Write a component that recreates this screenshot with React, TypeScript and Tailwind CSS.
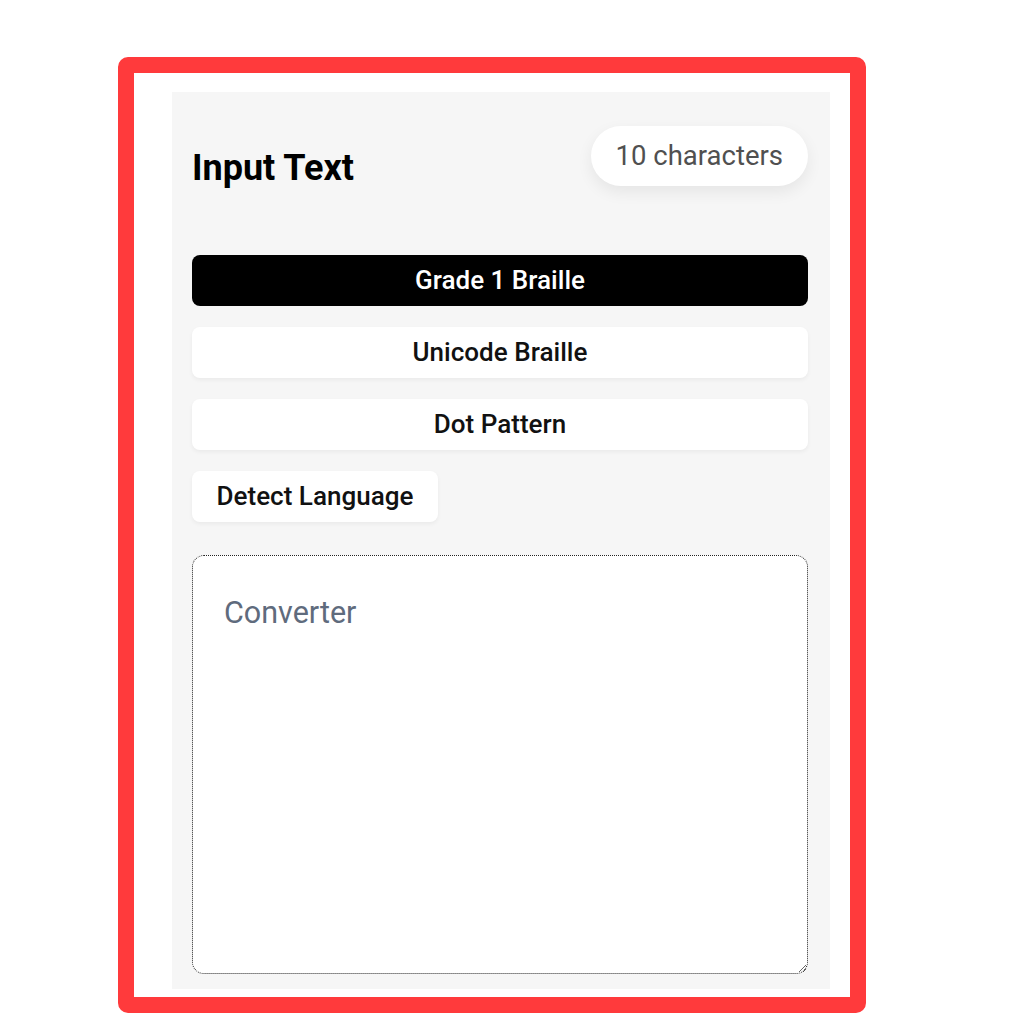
import React from "react";

const medium = { fontFamily: "'Roboto Medium', Roboto, 'Noto Sans', sans-serif" };

export default function App() {
  return (
    <div
      className="w-[1024px] h-[1024px] bg-white pt-[57px] pl-[118px]"
      style={{ fontFamily: "Roboto, 'Noto Sans', sans-serif" }}
    >
      <div className="w-[748px] h-[956px] border-[16px] border-[#ff3a3c] rounded-[10px] pt-[19px] pl-[38px] pr-[20px] pb-[9px]">
        <div className="w-[658px] h-[897px] bg-[#f6f6f6] pt-[34px] pl-[20px] pr-[22px] pb-[15px] flex flex-col">
          <div className="flex justify-between items-start h-[60px]">
            <h1 className="mt-[21px] text-[36px] leading-[42px] font-bold text-black">
              Input Text
            </h1>
            <div className="h-[60px] px-[25px] rounded-full bg-white shadow-[0_6px_16px_rgba(0,0,0,0.07)] flex items-center text-[27.5px] text-[#505050]">
              10 characters
            </div>
          </div>
          <div className="mt-[69px] flex flex-col gap-[21px]">
            <button style={medium} className="h-[51px] w-full rounded-[8px] bg-black text-white text-[26px] font-medium">
              Grade 1 Braille
            </button>
            <button style={medium} className="h-[51px] w-full rounded-[8px] bg-white text-[#111] text-[26px] font-medium shadow-[0_2px_4px_rgba(0,0,0,0.05)]">
              Unicode Braille
            </button>
            <button style={medium} className="h-[51px] w-full rounded-[8px] bg-white text-[#111] text-[26px] font-medium shadow-[0_2px_4px_rgba(0,0,0,0.05)]">
              Dot Pattern
            </button>
            <div>
              <button style={medium} className="h-[51px] w-[246px] rounded-[8px] bg-white text-[#111] text-[26px] font-medium shadow-[0_2px_4px_rgba(0,0,0,0.05)]">
                Detect Language
              </button>
            </div>
          </div>
          <textarea
            className="mt-[33px] h-[419px] w-full rounded-[12px] border-[1.5px] border-dotted border-[#222] bg-white pt-[36px] px-[31px] text-[30.5px] leading-[42px] text-black placeholder:text-[#5f6b7d] outline-none"
            placeholder="Converter"
            style={{ fontFamily: "Roboto, 'Noto Sans', sans-serif" }}
          />
        </div>
      </div>
    </div>
  );
}
